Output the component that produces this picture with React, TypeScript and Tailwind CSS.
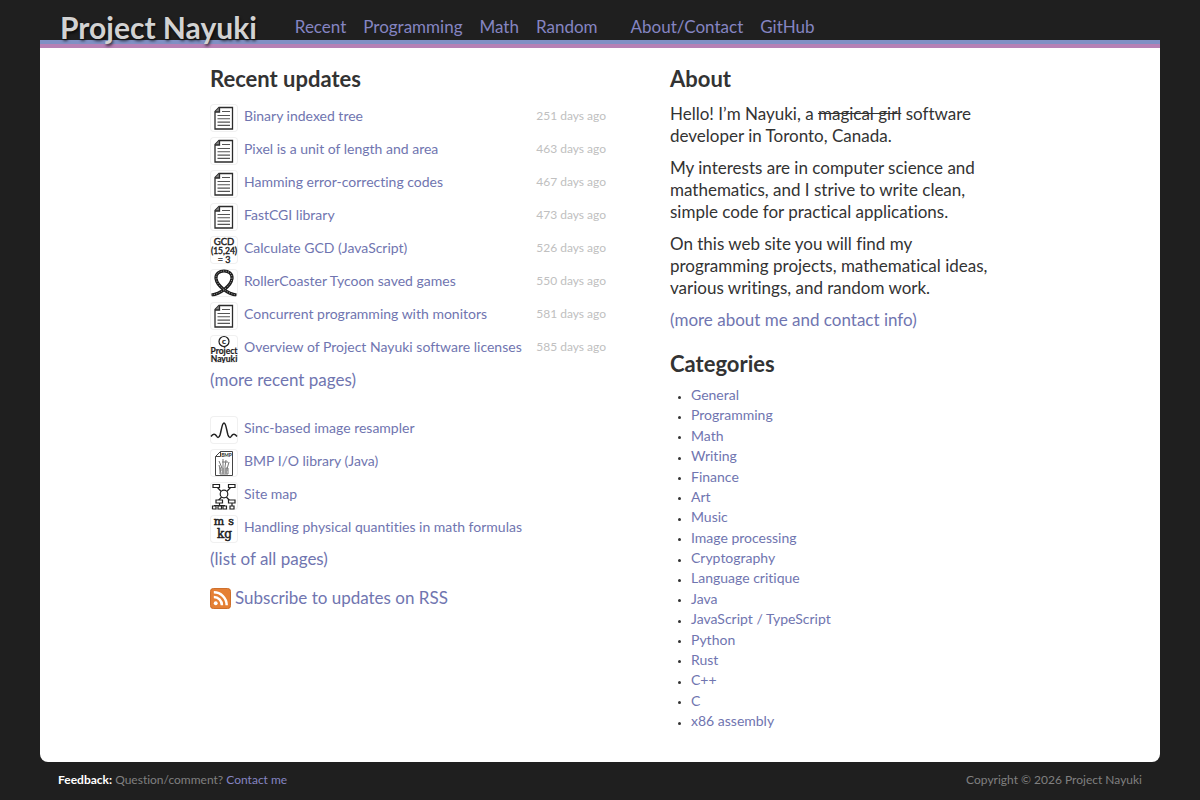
import React, { ReactNode } from "react";

type IconName = "page" | "gcd" | "coaster" | "copyright" | "sinc" | "bmp" | "map" | "units";

const track = "M1.5 26C10 25 21 17 22 9.5C22.5 4.5 18.5 2 14 2C9.5 2 5.5 4.5 6 9.5C7 17 18 25 26.5 26";

const drawings: Record<IconName, ReactNode> = {
  page: (
    <g fill="none" stroke="#2c2c2c" strokeWidth="1.3">
      <path d="M9 3.5H22.5V25H5V7.5Z" />
      <path d="M9.5 3.5V8H5" fill="#888" />
      <path d="M12 7.5H20M7.5 11.5H20M7.5 14.8H20M7.5 18.1H20M7.5 21.4H20" stroke="#555" strokeWidth="1.1" />
    </g>
  ),
  gcd: (
    <g fill="#222" stroke="#222" strokeWidth="0.4" textAnchor="middle" fontFamily="Lato, sans-serif">
      <text x="14" y="8.5" fontSize="9.5">GCD</text>
      <text x="14" y="18" fontSize="8.5">(15,24)</text>
      <text x="14" y="27" fontSize="9">= 3</text>
    </g>
  ),
  coaster: (
    <g fill="none">
      <path d={track} stroke="#1c1c1c" strokeWidth="3.2" />
      <path d={track} stroke="#aaa" strokeWidth="1" strokeDasharray="1 1.5" />
    </g>
  ),
  copyright: (
    <g fill="#1c1c1c" stroke="#1c1c1c" strokeWidth="0.2" textAnchor="middle" fontFamily="Lato, sans-serif" fontWeight="700">
      <circle cx="14" cy="6.5" r="5" fill="none" strokeWidth="1.2" />
      <text x="14" y="9.2" fontSize="8">c</text>
      <text x="14" y="19" fontSize="8.5">Project</text>
      <text x="14" y="27" fontSize="8.5">Nayuki</text>
    </g>
  ),
  sinc: (
    <path d="M1 20.5C3 17.5 5 17.5 6.5 20C7.5 22 9 22 10 19C11.5 14 12 7 14 7C16 7 16.5 14 18 19C19 22 20.5 22 21.5 20C23 17.5 25 17.5 27 20.5" fill="none" stroke="#222" strokeWidth="1.5" />
  ),
  bmp: (
    <g fill="none" stroke="#444" strokeWidth="1">
      <path d="M10.5 2.5H22.5V26.5H5.5V7.5Z" />
      <path d="M10.5 2.5V7.5H5.5" />
      <text x="16.5" y="7.8" fontSize="4.8" fontWeight="700" textAnchor="middle" stroke="none" fill="#222" fontFamily="Lato, sans-serif">BMP</text>
      <path d="M9 12L12 19M13 10V18M16 11L15 18M19 13L17 20M10 19H18V25H10ZM9 16L11 24M13 19V25M16 19V25M12 13H18M11 21H18M12 23H17" stroke="#777" />
    </g>
  ),
  map: (
    <g fill="#fff" stroke="#222" strokeWidth="1.2">
      <path d="M7 5L21 20M21 5L7 20M9.5 20V26M4.5 26V23.5H14.5V26M22 20V25" fill="none" />
      <path d="M3 2.5H9.5V5.5H3ZM18.5 2.5H25V5.5H18.5ZM6 18H12.5V21H6ZM18.5 18H25V21H18.5ZM2.5 24H6V27H2.5ZM8 24H11.5V27H8ZM13 24H16.5V27H13ZM20 24H24V27H20Z" />
      <circle cx="14" cy="12" r="3.8" />
    </g>
  ),
  units: (
    <g fill="#1c1c1c" stroke="#1c1c1c" strokeWidth="0.5" textAnchor="middle" fontFamily="'DejaVu Serif', serif">
      <text x="9" y="10" fontSize="11">m</text>
      <text x="21" y="10" fontSize="11">s</text>
      <text x="14.5" y="23" fontSize="12">kg</text>
    </g>
  ),
};

function Thumb({ name }: { name: IconName }) {
  return (
    <svg viewBox="0 0 28 28" className="size-7 shrink-0 rounded-[4px] shadow-[inset_0_0_0_1px_#f0f0f0]" aria-hidden="true">
      {drawings[name]}
    </svg>
  );
}

const recent: { icon: IconName; title: string; age: number }[] = [
  { icon: "page", title: "Binary indexed tree", age: 251 },
  { icon: "page", title: "Pixel is a unit of length and area", age: 463 },
  { icon: "page", title: "Hamming error-correcting codes", age: 467 },
  { icon: "page", title: "FastCGI library", age: 473 },
  { icon: "gcd", title: "Calculate GCD (JavaScript)", age: 526 },
  { icon: "coaster", title: "RollerCoaster Tycoon saved games", age: 550 },
  { icon: "page", title: "Concurrent programming with monitors", age: 581 },
  { icon: "copyright", title: "Overview of Project Nayuki software licenses", age: 585 },
];

const picks: { icon: IconName; title: string }[] = [
  { icon: "sinc", title: "Sinc-based image resampler" },
  { icon: "bmp", title: "BMP I/O library (Java)" },
  { icon: "map", title: "Site map" },
  { icon: "units", title: "Handling physical quantities in math formulas" },
];

const categories = [
  "General", "Programming", "Math", "Writing", "Finance", "Art", "Music", "Image processing", "Cryptography",
  "Language critique", "Java", "JavaScript / TypeScript", "Python", "Rust", "C++", "C", "x86 assembly",
];

function Entry({ icon, title, age }: { icon: IconName; title: string; age?: number }) {
  return (
    <li className="flex h-[33px] items-start">
      <Thumb name={icon} />
      <a href="#" className="ml-1.5 text-[14px] leading-6">{title}</a>
      {age !== undefined && <span className="ml-auto text-[12px] leading-6 text-[#c0c0c0]">{age} days ago</span>}
    </li>
  );
}

export default function App() {
  return (
    <div className="flex min-h-screen flex-col bg-[#1f1f1f] px-10 font-[Lato,sans-serif] text-[17px] leading-[22px] text-[#333] [font-variant-ligatures:none]">
      <header className="relative flex h-10 items-end gap-[38px] pl-5">
        <h1 className="pb-px text-[30px] leading-6 font-bold text-[#d2d2d2] [text-shadow:1px_2px_3px_#000000b0]">Project Nayuki</h1>
        <nav className="flex gap-[17px] pb-0.5 text-[#8585c2]">
          <a href="#">Recent</a>
          <a href="#">Programming</a>
          <a href="#">Math</a>
          <a href="#">Random</a>
          <a href="#" className="ml-4">About/Contact</a>
          <a href="#">GitHub</a>
        </nav>
      </header>
      <main className="flex-1 rounded-b-[8px] bg-white">
        <div className="h-1 bg-[#8090c4]" />
        <div className="h-1 bg-[#b681b5]" />
        <div className="mx-auto flex max-w-[780px] gap-16 pt-[17px] pb-7 [&_a]:text-[#7075b0]">
          <section className="w-[396px]">
            <h2 className="text-[22px] leading-7 font-bold">Recent updates</h2>
            <ul className="mt-[11px]">{recent.map((r) => <Entry key={r.title} {...r} />)}</ul>
            <p className="mt-px"><a href="#">(more recent pages)</a></p>
            <ul className="mt-[25px]">{picks.map((p) => <Entry key={p.title} {...p} />)}</ul>
            <p><a href="#">(list of all pages)</a></p>
            <p className="mt-[17px]">
              <a href="#" className="flex items-center gap-1">
                <svg viewBox="0 0 22 22" className="size-[21px]" aria-hidden="true">
                  <rect x="0.5" y="0.5" width="21" height="21" rx="3" fill="#e58035" stroke="#cc6a25" />
                  <circle cx="6" cy="16" r="2" fill="#fff" />
                  <path d="M4 9.5A8.5 8.5 0 0 1 12.5 18M4 4.5A13.5 13.5 0 0 1 17.5 18" fill="none" stroke="#fff" strokeWidth="2.6" />
                </svg>
                Subscribe to updates on RSS
              </a>
            </p>
          </section>
          <section className="w-80">
            <h2 className="text-[22px] leading-7 font-bold">About</h2>
            <div className="mt-2.5 flex flex-col gap-2.5">
              <p>Hello! I’m Nayuki, a <s>magical girl</s> software developer in Toronto, Canada.</p>
              <p>My interests are in computer science and mathematics, and I strive to write clean, simple code for practical applications.</p>
              <p>On this web site you will find my programming projects, mathematical ideas, various writings, and random work.</p>
              <p><a href="#">(more about me and contact info)</a></p>
            </div>
            <h2 className="mt-[19px] text-[22px] leading-7 font-bold">Categories</h2>
            <ul className="mt-[7px] flex min-h-[346px] flex-col justify-between pl-2">
              {categories.map((c) => (
                <li key={c} className="flex items-center gap-2.5 text-[14px] leading-5 before:mt-1 before:size-[3px] before:rounded-full before:bg-[#333]">
                  <a href="#">{c}</a>
                </li>
              ))}
            </ul>
          </section>
        </div>
      </main>
      <footer className="flex justify-between px-[18px] pt-[7px] pb-[9px] text-[12px] text-[#808080]">
        <p><strong className="text-white">Feedback:</strong> Question/comment? <a href="#" className="text-[#8585c2]">Contact me</a></p>
        <p>Copyright © 2026 Project Nayuki</p>
      </footer>
    </div>
  );
}
